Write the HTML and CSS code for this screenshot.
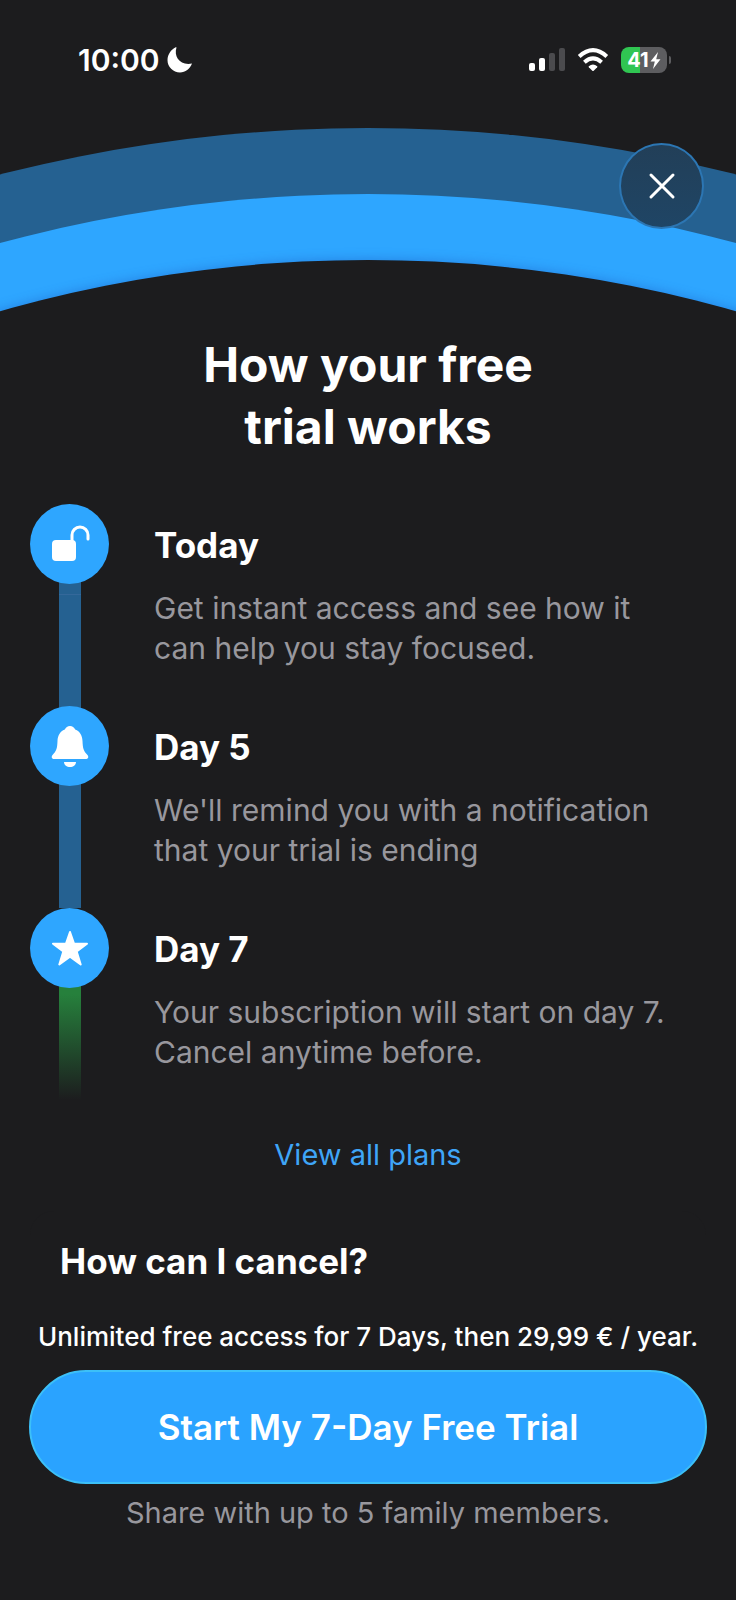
FILE: index.html
```html
<!DOCTYPE html>
<html lang="en">
<head>
<meta charset="utf-8">
<meta name="viewport" content="width=device-width, initial-scale=1">
<title>How your free trial works</title>
<link rel="stylesheet" href="styles.css">
</head>
<body>
<div class="screen">
  <div class="status">
    <div class="status-group">
      <span class="time">10:00</span>
      <svg class="moon" viewBox="0 0 26 26" aria-hidden="true"><path d="M9.500 0.600C6.500 9.500 13 19 25 16.600C22.800 22.300 18.500 25.500 13 25.500C6 25.500 0.500 20 0.500 13.300C0.500 7.500 4 2.500 8.700 0.300Q9.700 0 9.500 0.600Z"/></svg>
    </div>
    <div class="status-group">
      <svg class="signal" viewBox="0 0 36 24" aria-hidden="true"><rect x="0" y="15" width="6" height="8" rx="2"/><rect x="10" y="10" width="6" height="13" rx="2"/><rect class="dim" x="20" y="5" width="6" height="18" rx="2"/><rect class="dim" x="30" y="0" width="6" height="23" rx="2"/></svg>
      <svg class="wifi" viewBox="0 0 32 24" aria-hidden="true"><path class="wave" d="M2.200 8.400Q16-4 29.800 8.400M7.400 14.200Q16 6.600 24.600 14.200"/><path d="M11.800 18.200Q16 14.600 20.200 18.200Q20.700 18.700 20.200 19.200L16.700 22.700Q16 23.300 15.300 22.700L11.800 19.200Q11.300 18.700 11.800 18.200Z"/></svg>
      <span class="battery"><span>41</span><svg class="bolt" viewBox="0 0 11 17" aria-hidden="true"><path d="M8 0L0.500 9.500H4.800L3 17L10.500 7.200H6.200Z"/></svg></span>
    </div>
  </div>

  <header class="hero">
    <svg class="arcs" viewBox="0 0 736 184" aria-hidden="true">
      <circle class="arc-outer" cx="368" cy="1479" r="1479"/>
      <circle class="arc-inner" cx="368" cy="1472" r="1406"/>
      <circle class="arc-page" cx="368" cy="1478" r="1346"/>
    </svg>
    <button class="close" type="button" aria-label="Close">
      <svg viewBox="0 0 26 26" aria-hidden="true"><path d="M2 2L24 24M24 2L2 24"/></svg>
    </button>
  </header>

  <main class="content">
    <h1 class="title">How your free<br>trial works</h1>
    <ol class="timeline">
      <li class="step first">
        <div class="rail"><span class="badge"><svg viewBox="0 0 40 40" aria-hidden="true"><rect x="2" y="16" width="24" height="21" rx="4"/><path class="shackle" d="M22 17V11A8 8 0 0 1 38 11V15"/></svg></span></div>
        <div class="copy"><h2>Today</h2><p>Get instant access and see how it<br>can help you stay focused.</p></div>
      </li>
      <li class="step">
        <div class="rail"><span class="badge"><svg viewBox="0 0 40 40" aria-hidden="true"><path d="M20 0C22.500 0 24 1.200 25.200 3.500C30 5.500 32.300 9.500 32.500 15C32.800 22.500 33.500 25 37.500 29C39 31 38.300 33 35.500 33H4.500C1.700 33 1 31 2.500 29C6.500 25 7.200 22.500 7.500 15C7.700 9.500 10 5.500 14.800 3.500C16 1.200 17.500 0 20 0Z"/><path d="M14 36H26C25.800 39.300 23.300 41 20 41S14.200 39.300 14 36Z"/></svg></span></div>
        <div class="copy"><h2>Day 5</h2><p>We'll remind you with a notification<br>that your trial is ending</p></div>
      </li>
      <li class="step last">
        <div class="rail"><span class="badge"><svg viewBox="0 0 40 40" aria-hidden="true"><path class="star" d="M20 4L24 15.500L37 15.700L26.700 23.500L30.700 36.500L20 28.800L9.300 36.500L13.300 23.500L3 15.700L16 15.500Z"/></svg></span></div>
        <div class="copy"><h2>Day 7</h2><p>Your subscription will start on day 7.<br>Cancel anytime before.</p></div>
      </li>
    </ol>
    <a class="plans" href="#plans">View all plans</a>
    <button class="faq" type="button">How can I cancel?</button>
  </main>

  <footer class="offer">
    <p class="price">Unlimited free access for 7 Days, then 29,99 € / year.</p>
    <button class="cta" type="button">Start My 7-Day Free Trial</button>
    <p class="share">Share with up to 5 family members.</p>
  </footer>
</div>
</body>
</html>
```
FILE: styles.css
```css
:root {
  --page: #1c1c1e;
  --blue: #2ea6ff;
  --deep: #256191;
  --grey: #98979d;
}
* { box-sizing: border-box; }
body {
  margin: 0;
  background: var(--page);
  color: #fff;
  font-family: Inter, "Liberation Sans", sans-serif;
}
h1, h2, p, ol { margin: 0; padding: 0; }
svg { display: block; overflow: visible; fill: #fff; }
button { font: inherit; color: inherit; cursor: pointer; }
.screen { min-height: 100vh; display: flex; flex-direction: column; }

.status {
  height: 128px;
  padding: 40px 69px 0 78px;
  display: flex;
  justify-content: space-between;
  align-items: flex-start;
}
.status-group { height: 40px; display: flex; align-items: center; gap: 12px; }
.time { font-size: 30px; font-weight: 600; line-height: 40px; }
.status-group:first-child { gap: 7px; }
.moon { width: 26px; height: 26px; }
.signal { width: 36px; height: 24px; }
.signal .dim { fill: #4b4b4e; }
.wifi { width: 32px; height: 24px; }
.wave { fill: none; stroke: #fff; stroke-width: 4; }
.battery {
  position: relative;
  width: 46px;
  height: 26px;
  border-radius: 8px;
  background: linear-gradient(90deg, #30c552 41%, #5d5d60 41%);
  display: flex;
  align-items: center;
  justify-content: center;
  gap: 1px;
  font-size: 20px;
  font-weight: 700;
  line-height: 26px;
}
.battery::after {
  content: "";
  position: absolute;
  right: -4px;
  top: 9px;
  width: 2px;
  height: 8px;
  border-radius: 0 2px 2px 0;
  background: #5d5d60;
}
.bolt { width: 11px; height: 17px; }

.hero { position: relative; overflow: hidden; }
.arcs { width: 100%; overflow: hidden; }
.arc-outer { fill: var(--deep); }
.arc-inner { fill: var(--blue); }
.arc-page { fill: var(--page); filter: drop-shadow(0 0 6px rgba(20, 70, 180, 0.4)); }
.close {
  position: absolute;
  top: 15px;
  right: 32px;
  width: 85px;
  height: 86px;
  padding: 0;
  border: 2px solid #2c76b3;
  border-radius: 50%;
  background: linear-gradient(#223f58, #1f4565);
  display: grid;
  place-items: center;
}
.close svg { width: 26px; height: 26px; fill: none; stroke: #fff; stroke-width: 3; stroke-linecap: round; }

.content { flex: 1; display: flex; flex-direction: column; padding: 22px 30px 0; }
.title { font-size: 48px; font-weight: 700; line-height: 62px; text-align: center; }
.timeline { list-style: none; margin-top: 46px; }
.step { display: flex; gap: 45px; min-height: 202px; }
.rail {
  flex: none;
  width: 79px;
  background: linear-gradient(var(--deep), var(--deep)) center / 22px 100% no-repeat;
}
.first .rail {
  background-image: linear-gradient(transparent 40px, var(--deep) 40px, var(--deep) 90px, #34689a 90px, #34689a 91px, var(--deep) 91px);
}
.last { min-height: 192px; }
.last .rail { background-image: linear-gradient(transparent 40px, #26803c 40px, #26803c 86px, rgba(38, 128, 60, 0)); }
.badge {
  width: 79px;
  height: 80px;
  border-radius: 50%;
  background: var(--blue);
  display: grid;
  place-items: center;
}
.badge svg { width: 40px; height: 40px; }
.shackle { fill: none; stroke: #fff; stroke-width: 3; stroke-linecap: round; }
.star { stroke: #fff; stroke-width: 2; stroke-linejoin: round; }
.copy { padding-top: 20px; }
.copy h2 { font-size: 35px; font-weight: 700; line-height: 42px; }
.copy p { margin-top: 22px; font-size: 30px; line-height: 40px; color: var(--grey); }
.plans {
  align-self: center;
  margin-top: 35px;
  font-size: 29px;
  line-height: 40px;
  color: #3fa5f7;
  text-decoration: none;
}
.faq {
  height: 100px;
  margin-top: 36px;
  padding: 0 30px;
  border: 0;
  border-radius: 24px 24px 0 0;
  background: #1c1c1e;
  text-align: left;
  font-size: 35px;
  font-weight: 700;
}
.offer {
  padding: 8px 29px 68px;
  display: flex;
  flex-direction: column;
  text-align: center;
}
.price { font-size: 26px; font-weight: 500; line-height: 36px; white-space: nowrap; align-self: center; }
.cta {
  height: 114px;
  margin-top: 15px;
  border: 2px solid #3cc0f8;
  border-radius: 57px;
  background: #2aa3ff;
  font-size: 35px;
  font-weight: 600;
}
.share { margin-top: 9px; font-size: 29px; line-height: 40px; color: var(--grey); }
```
